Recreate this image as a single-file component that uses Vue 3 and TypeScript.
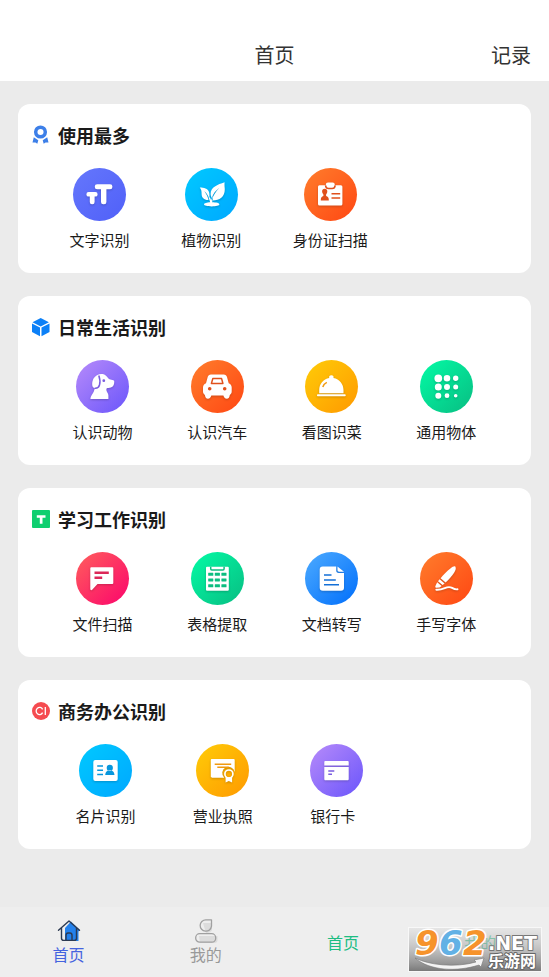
<script setup lang="ts">
interface Glyph {
  fill?: string
  cut?: string
  cutLine?: string
  line?: string
  lineWidth?: number
}

interface Tool {
  label: string
  tone: string
  glyph: Glyph
}

interface Section {
  title: string
  mark: 'medal' | 'cube' | 'text' | 'ci'
  spacer?: 'wide' | 'narrow'
  tools: Tool[]
}

const dot = (x: number, y: number, r: number): string =>
  `M${x - r} ${y}a${r} ${r} 0 1 0 ${2 * r} 0a${r} ${r} 0 1 0 ${-2 * r} 0z`

const box = (x: number, y: number, w: number, h: number, r = 0): string =>
  `M${x + r} ${y}h${w - 2 * r}a${r} ${r} 0 0 1 ${r} ${r}v${h - 2 * r}a${r} ${r} 0 0 1 ${-r} ${r}h${2 * r - w}a${r} ${r} 0 0 1 ${-r} ${-r}v${2 * r - h}a${r} ${r} 0 0 1 ${r} ${-r}z`

const dots = [
  dot(18.3, 18.3, 3.9), dot(27, 18.3, 3.3), dot(35.7, 18.3, 2.7),
  dot(18.3, 27, 3.5), dot(27, 27, 3), dot(35.7, 27, 2.5),
  dot(18.3, 35.7, 3), dot(27, 35.7, 2.4), dot(35.7, 35.7, 1.8),
].join('')

const cells = [20.7, 26.4, 32.2]
  .flatMap((y) => [17.2, 23.8, 30.4].map((x) => box(x, y, 5.1, 3.1, 0.4)))
  .join('')

const sections: Section[] = [
  {
    title: '使用最多',
    mark: 'medal',
    spacer: 'wide',
    tools: [
      {
        label: '文字识别',
        tone: 'indigo',
        glyph: {
          fill:
            box(21.8, 16.3, 17.6, 4.9, 2.3) + box(28, 17, 5.4, 19.3, 2.3) +
            box(13.4, 24, 11.2, 4.6, 2.2) + box(16.8, 25, 4.8, 11.3, 2.2),
        },
      },
      {
        label: '植物识别',
        tone: 'sky',
        glyph: {
          fill:
            'M39.6 14.3C32.5 16.6 25.5 19.4 25.6 25.8c0 1.7.5 3.1 1.3 4.2C28 26 30.600 22.300 34.500 19.700 30.500 24 28 27.500 26.800 32.500c8 .3 13.700-4 12.900-12.500-.2-2-.3-3.700-.1-5.700z' +
            'M14.800 19.600c4.200 0 8 1 9.200 4.300.7 2 .4 4.400.3 7.300-.9-3.200-2.500-5.800-5-8.100 2 2.900 3.500 5.500 4.200 9-4.400.2-7-2.400-6.900-6.200 0-2.600-.3-4.500-1.800-6.300z' +
            'M19 36.300c0-1.200 3-2 6.200-2.100-.2-1-.8-2.600-1.500-4l1.100-1c.6 1 1 2 1.300 3l1.300-3 .7 1-1 4c4 0 7.300.8 7.300 2.100 0 1.300-3.400 2.100-7.700 2.100s-7.700-.8-7.700-2.100z',
        },
      },
      {
        label: '身份证扫描',
        tone: 'orange',
        glyph: {
          fill: box(14, 17.3, 24.4, 20.2, 1.5) + box(21.8, 14.6, 9, 5, 2.2),
          cut:
            'M23.300 23.300a2.600 2.600 0 0 0-5.200 0c0 1.500.6 2.400 1.300 3.100v1.700c-1.600.5-2.600 1.300-2.600 3.600v.8h8v-.8c0-2.300-1-3.100-2.700-3.600v-1.700c.7-.7 1.200-1.600 1.200-3.100z',
          cutLine: 'M27.500 25.800h8.700M27.500 30h8.700M21.500 17.400c.3 2.200 1 3.200 3 3.200h3.700c2 0 2.700-1 3-3.200',
        },
      },
    ],
  },
  {
    title: '日常生活识别',
    mark: 'cube',
    tools: [
      {
        label: '认识动物',
        tone: 'purple',
        glyph: {
          fill:
            'M21.500 15c2-1.200 6-1.300 8.200.4 1.700 1.300 2.200 3 3.800 3.900l3.800 1c1 .3 1 1.200.9 2.300-.2 3.300-2 5.400-5.700 5.500-1.800 0-2.300.6-2.100 2.200.2 1.600 2 3 2 5.200V39H14.400c0-3.200 2.200-4.700 3.300-7.300.7-1.700 1-3 1.200-3.700-1.700 0-2.700-1.500-2.700-3.600 0-3.900 1.500-7.700 5.300-9.400z',
          cut: dot(27.8, 20.7, 1.4),
          cutLine: 'M22.800 15.500c1.200 3.500 1.600 6.500.7 9.500-.5 1.800-1.800 3.500-4.800 3.200',
        },
      },
      {
        label: '认识汽车',
        tone: 'orange',
        glyph: {
          fill:
            'M20 14.400h12.700c1.800 0 2.800.9 3.300 2.600l1.700 6.200c2.100.8 3 2.300 3 4.400v4c0 1.700-.8 2.700-1.900 3.300-.3 2.300-1.200 3.800-3 3.800-1.900 0-2.900-1.200-3.400-3.200H20.300c-.5 2-1.500 3.200-3.400 3.200-1.800 0-2.700-1.500-3-3.800-1.100-.6-1.900-1.600-1.900-3.300v-4c0-2.100.9-3.600 3-4.400l1.700-6.200c.5-1.700 1.500-2.600 3.300-2.600z',
          cut: dot(18.7, 28.8, 1.8) + dot(33.7, 28.8, 1.8),
          cutLine: 'M21.800 18.600h8.800l1.300 4.900H20.400z',
        },
      },
      {
        label: '看图识菜',
        tone: 'amber',
        glyph: {
          fill:
            'M24.200 17.900a2.200 2.200 0 1 1 4.300 0C34.500 19 38.500 24 38.500 30v3.200H14.200V30c0-6 4-11 10-12.100z' +
            box(12, 34.200, 28.700, 2.1, 0.8),
          cutLine: 'M17.800 27c.5-2 1.800-3.600 4-4.700',
        },
      },
      { label: '通用物体', tone: 'green', glyph: { fill: dots } },
    ],
  },
  {
    title: '学习工作识别',
    mark: 'text',
    tools: [
      {
        label: '文件扫描',
        tone: 'pink',
        glyph: {
          fill: 'M15.300 15.300h21a1 1 0 0 1 1 1V31a1 1 0 0 1-1 1H21.500l-5.300 5.800c-.7.800-1.900.4-1.900-.7V16.300a1 1 0 0 1 1-1z',
          cut: box(18.500, 19.500, 14.300, 2.400) + box(18.500, 24.600, 7.700, 2.400),
        },
      },
      {
        label: '表格提取',
        tone: 'green',
        glyph: {
          fill: box(15, 14.700, 22.800, 24, 1),
          cut: cells,
          cutLine: 'M19.700 14.700v2.100c0 .8.400 1.100 1.100 1.100h11.200c.7 0 1.100-.3 1.100-1.100v-2.100',
        },
      },
      {
        label: '文档转写',
        tone: 'blue',
        glyph: {
          fill:
            'M17.700 14.400h13.500v4.200c0 1.600.8 2.400 2.400 2.400H39v14.800a3 3 0 0 1-3 3H17.700a3 3 0 0 1-3-3V17.400a3 3 0 0 1 3-3z' +
            'M32.500 14.400l6.500 5.400h-4.800c-1.200 0-1.700-.6-1.700-1.700z',
          cutLine: 'M19 23h7.500M19 27.900h11.800M19 32.800h15',
        },
      },
      {
        label: '手写字体',
        tone: 'orange',
        glyph: {
          fill:
            'M35.300 14.500c1.100 1.800.2 4.100-1.200 6.200-2.200 3.300-5.200 6.900-8.500 9.800l-5-4.200c2.900-3.700 6.500-7.300 9.800-9.800 2-1.500 3.700-2.500 4.900-2z' +
            'M19.600 27.300l5 4.200-2 1.600-4.600-3.800zM17.200 30.300l4.400 3.700-2 1.400-3.200.3c-1 0-1.200-.6-1.100-1.500z',
          line: 'M16.300 37.700c3.300.3 6-.6 8.500-1.600 3.300-1.400 5.400-1.300 7.300-.2 2 1.200 3.700 1.600 5.400 1.400',
          lineWidth: 1.9,
        },
      },
    ],
  },
  {
    title: '商务办公识别',
    mark: 'ci',
    spacer: 'narrow',
    tools: [
      {
        label: '名片识别',
        tone: 'sky',
        glyph: {
          fill: box(14.300, 16, 24.400, 21, 2),
          cut:
            dot(30.800, 23.900, 3.100) +
            'M26.200 31c.3-2.900 1.500-4.200 3.300-4.500h2.700c1.800.3 3 1.600 3.300 4.500z',
          cutLine: 'M18.200 21.900h5.800M18.200 26.300h5.800M18.200 30.600h5.800',
        },
      },
      {
        label: '营业执照',
        tone: 'amber',
        glyph: {
          fill:
            'M16 15h21.500c.8 0 1.200.4 1.200 1.200v11.700a6.300 6.300 0 1 0-10.500 5.800H16c-.8 0-1.200-.4-1.200-1.200V16.200c0-.8.400-1.200 1.200-1.200z' +
            'M29.600 33.300v5.100l3.200-1.400 3.300 1.400v-5.100z',
          cutLine: 'M18.700 20.200h16.500M21.300 23.300h11.300',
          line: dot(32.900, 30, 4),
          lineWidth: 1.700,
        },
      },
      {
        label: '银行卡',
        tone: 'purple',
        glyph: {
          fill:
            'M15.500 17h22c.8 0 1.200.5 1.200 1.300v3.200H14.300v-3.200c0-.8.4-1.300 1.200-1.300z' +
            'M14.300 23h24.400v12c0 .8-.4 1.300-1.200 1.300h-22c-.8 0-1.200-.5-1.200-1.300z',
          cutLine: 'M18.300 27h6M18.300 30.200h3.700',
        },
      },
    ],
  },
]
</script>

<template>
  <div class="page">
    <header class="topbar">
      <h1 class="topbar-title">首页</h1>
      <button type="button" class="topbar-action">记录</button>
    </header>

    <main class="content">
      <section v-for="section in sections" :key="section.title" class="card">
        <h2 class="card-title">
          <svg class="mark" viewBox="0 0 18 18" aria-hidden="true">
            <template v-if="section.mark === 'medal'">
              <circle cx="8.500" cy="6" r="4.800" fill="none" stroke="#3d7fe8" stroke-width="3.500" />
              <path d="M1.800 11.200l4.500 3-1 3.500-1.800-1.300-3 .1zM15.200 11.200l-4.500 3 1 3.500 1.800-1.300 3 .1z" fill="#3d7fe8" />
            </template>
            <template v-else-if="section.mark === 'cube'">
              <path d="M8.700 0l8.200 4.200-8.200 4.300L.5 4.200zM0 5.400l8 4.200v8.600l-8-4.100zM17.500 5.400l-8 4.200v8.600l8-4.100z" fill="#0c80f7" />
            </template>
            <template v-else-if="section.mark === 'text'">
              <rect width="18" height="18" rx="1" fill="#0fcf70" />
              <path d="M4.800 5.200h8.700v2.600h-3v6H7.800v-6h-3z" fill="#fff" />
            </template>
            <template v-else>
              <circle cx="9" cy="9" r="9" fill="#f54b50" />
              <path d="M10.600 7.400a3.400 3.600 0 1 0 0 3.200M13.300 4.900v8.200" fill="none" stroke="#fff" stroke-width="1.300" />
            </template>
          </svg>
          {{ section.title }}
        </h2>

        <div class="tools">
          <button v-for="tool in section.tools" :key="tool.label" type="button" class="tool">
            <span class="disc" :class="tool.tone">
              <svg class="glyph" viewBox="0 0 53 53" aria-hidden="true">
                <path v-if="tool.glyph.fill" :d="tool.glyph.fill" fill="#fff" />
                <path v-if="tool.glyph.line" :d="tool.glyph.line" fill="none" stroke="#fff" :stroke-width="tool.glyph.lineWidth" stroke-linecap="round" />
                <path v-if="tool.glyph.cut" :d="tool.glyph.cut" fill="currentColor" />
                <path v-if="tool.glyph.cutLine" :d="tool.glyph.cutLine" fill="none" stroke="currentColor" stroke-width="1.500" stroke-linejoin="round" />
              </svg>
            </span>
            <span class="tool-label">{{ tool.label }}</span>
          </button>
          <span v-if="section.spacer" class="spacer" :class="section.spacer"></span>
        </div>
      </section>
    </main>

    <nav class="tabs">
      <a href="#home" class="tab active">
        <svg class="tab-icon" viewBox="0 0 24 24" aria-hidden="true">
          <path d="M8 9l6-6.500 8.800 8.500-1.300 1.500V22H8z" fill="#2481ec" />
          <path d="M1.500 11.300L12 2l10.500 9.300M4.500 9.300v10c0 1.400.7 2.100 2.100 2.100h10.800c1.400 0 2.100-.7 2.100-2.100v-10M9 21.400v-5.200c0-1.400.8-2.200 2-2.200h2c1.200 0 2 .8 2 2.200v5.200" fill="none" stroke="#2c3a52" stroke-width="1.400" stroke-linejoin="round" stroke-linecap="round" />
        </svg>
        <span>首页</span>
      </a>
      <a href="#mine" class="tab">
        <svg class="tab-icon" viewBox="0 0 24 24" aria-hidden="true">
          <path d="M9 4h9v6c0 3-3 4-6 4zM5 17h18.500v4c0 2-1 3-3 3H6z" fill="#dcdcdc" />
          <path d="M17.500.8v6.400a5.700 5.700 0 1 1-5.700-6.400z" fill="none" stroke="#a0a0a0" stroke-width="1.300" stroke-linejoin="round" />
          <rect x="1.700" y="14.700" width="20" height="8.500" rx="4" fill="none" stroke="#a0a0a0" stroke-width="1.300" />
        </svg>
        <span>我的</span>
      </a>
      <a href="#home" class="tab green-text">首页</a>
      <a href="#mine" class="tab green-text">我的</a>
      <div class="stamp">
        <svg viewBox="0 0 134 45" role="img" aria-label="962.NET 乐游网">
          <defs>
            <linearGradient id="stamp-bg" x1="0" y1="0" x2="0" y2="1">
              <stop offset="0" stop-color="#dedede" stop-opacity="0.500" />
              <stop offset="0.500" stop-color="#acacac" stop-opacity="0.700" />
              <stop offset="1" stop-color="#787878" />
            </linearGradient>
          </defs>
          <rect x="0.500" y="0.500" width="133" height="44" fill="url(#stamp-bg)" stroke="#f8f8f8" />
          <path d="M7 31c14 7 40 10 61 4l-2-2 10-2-3 9-2-2C49 45 22 44 7 31z" fill="#f4f4f4" stroke="#777" stroke-width="0.600" />
          <g class="stamp-number">
            <text x="7" y="28" fill="#f6932b">9</text>
            <text x="31" y="28" fill="#62b1e5">6</text>
            <text x="55" y="28" fill="#f6932b">2</text>
          </g>
          <text class="stamp-net" x="80" y="23">.NET</text>
          <text class="stamp-name" x="80" y="40">乐游网</text>
        </svg>
      </div>
    </nav>
  </div>
</template>

<style>
body {
  margin: 0;
  background: #ebebeb;
}
</style>

<style scoped>
.page {
  min-height: 100vh;
  display: flex;
  flex-direction: column;
  background: #ebebeb;
  color: #1a1a1a;
  font-family: "Noto Sans CJK SC", "Noto Sans", sans-serif;
}

button {
  margin: 0;
  padding: 0;
  border: 0;
  background: none;
  color: inherit;
  font-family: inherit;
  cursor: pointer;
}

.topbar {
  display: grid;
  grid-template-columns: 1fr auto 1fr;
  align-items: center;
  padding: 40px 18px 11px;
  background: #fff;
  color: #333;
}

.topbar-title {
  grid-column: 2;
  margin: 0;
  font-size: 20px;
  font-weight: 400;
  line-height: 30px;
}

.topbar-action {
  justify-self: end;
  font-size: 20px;
  line-height: 30px;
}

.content {
  flex: 1;
  display: flex;
  flex-direction: column;
  gap: 23px;
  padding: 23px 18px;
}

.card {
  padding: 20px 0 22px;
  border-radius: 12px;
  background: #fff;
}

.card-title {
  display: flex;
  align-items: center;
  gap: 8px;
  margin: 0 0 22px;
  padding: 0 14px;
  font-size: 18px;
  font-weight: 700;
  line-height: 22px;
}

.mark {
  width: 18px;
  height: 18px;
  overflow: visible;
}

.tools {
  display: flex;
  justify-content: space-evenly;
}

.tool {
  display: flex;
  flex-direction: column;
  align-items: center;
  gap: 8px;
}

.tool-label {
  min-width: 53px;
  font-size: 15px;
  line-height: 22px;
  text-align: left;
}

.spacer.wide {
  width: 60px;
}

.spacer.narrow {
  width: 53px;
}

.disc {
  display: block;
  width: 53px;
  height: 53px;
  border-radius: 50%;
}

.glyph {
  display: block;
  width: 53px;
  height: 53px;
  filter: drop-shadow(0 1px 1px rgba(0, 0, 0, 0.2));
}

.indigo {
  background: linear-gradient(135deg, #6577fc, #5060f8);
  color: #5a6af8;
}

.sky {
  background: linear-gradient(135deg, #00c9ff, #00a8ff);
  color: #0797dd;
}

.orange {
  background: linear-gradient(135deg, #ff7d2c, #ff4713);
  color: #e0501c;
}

.purple {
  background: linear-gradient(135deg, #b78bfa, #6a55fb);
  color: #7a5ce0;
}

.amber {
  background: linear-gradient(135deg, #ffcc08, #ff9900);
  color: #f09a10;
}

.green {
  background: linear-gradient(135deg, #03fba5, #08bd82);
  color: #0cbd80;
}

.pink {
  background: linear-gradient(135deg, #ff5f5c, #fb046c);
  color: #dc2858;
}

.blue {
  background: linear-gradient(135deg, #4dabff, #006efb);
  color: #1470d8;
}

.tabs {
  position: relative;
  display: grid;
  grid-template-columns: repeat(4, 1fr);
  height: 70px;
  background: #eee;
}

.tab {
  display: flex;
  flex-direction: column;
  align-items: center;
  justify-content: center;
  color: #999;
  font-size: 16px;
  line-height: 22px;
  text-decoration: none;
}

.tab.active {
  color: #4463df;
}

.tab.green-text {
  color: #1dbd83;
}

.tab-icon {
  width: 24px;
  height: 24px;
}

.stamp {
  position: absolute;
  right: 7px;
  bottom: 5px;
  width: 134px;
  height: 45px;
}

.stamp svg {
  display: block;
  width: 100%;
  height: 100%;
  overflow: visible;
}

.stamp text {
  paint-order: stroke;
  stroke-linejoin: round;
}

.stamp-number {
  font: italic 700 34px "DejaVu Sans", sans-serif;
  stroke: #fff;
  stroke-width: 3px;
}

.stamp-net {
  font: 700 19px "DejaVu Sans", sans-serif;
  fill: #fff;
  stroke: #777;
  stroke-width: 2px;
}

.stamp-name {
  font: 700 16px "Noto Sans CJK SC", sans-serif;
  fill: #fff;
  stroke: #666;
  stroke-width: 2px;
}
</style>
